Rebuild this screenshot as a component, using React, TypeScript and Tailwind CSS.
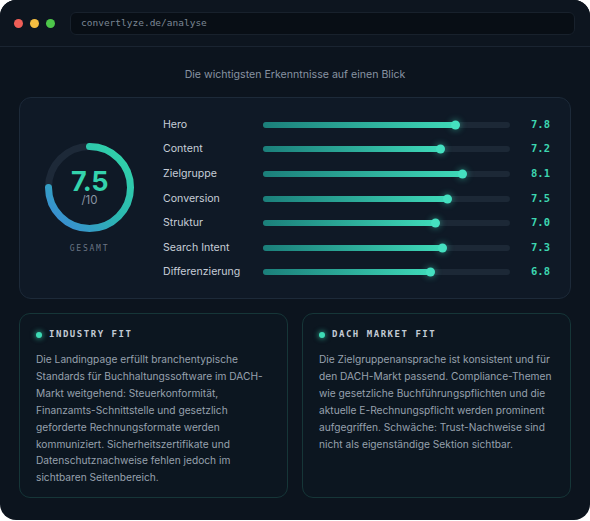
import React from "react";

interface Score {
  label: string;
  value: number;
}

const scores: Score[] = [
  { label: "Hero", value: 7.8 },
  { label: "Content", value: 7.2 },
  { label: "Zielgruppe", value: 8.1 },
  { label: "Conversion", value: 7.5 },
  { label: "Struktur", value: 7.0 },
  { label: "Search Intent", value: 7.3 },
  { label: "Differenzierung", value: 6.8 },
];

const sans = "font-['Inter','Noto_Sans',sans-serif]";
const mono = "font-['DejaVu_Sans_Mono','Liberation_Mono',monospace]";

function ScoreRing({ value }: { value: number }) {
  // ring: 89px, stroke 7
  const size = 89;
  const r = 41;
  const c = size / 2;
  return (
    <div className="relative w-[89px] h-[89px]">
      <svg width={size} height={size} viewBox={`0 0 ${size} ${size}`}>
        <defs>
          <linearGradient id="ringGrad" x1="80" y1="10" x2="10" y2="80" gradientUnits="userSpaceOnUse">
            <stop offset="0" stopColor="#31d3a9" />
            <stop offset="0.5" stopColor="#2bb8b0" />
            <stop offset="1" stopColor="#3a8bd3" />
          </linearGradient>
        </defs>
        <circle cx={c} cy={c} r={r} fill="none" stroke="#1d2938" strokeWidth={7} />
        <path
          d={`M ${c} ${c - r} A ${r} ${r} 0 1 1 ${c - r} ${c}`}
          fill="none"
          stroke="url(#ringGrad)"
          strokeWidth={7}
          strokeLinecap="round"
        />
      </svg>
      <div className="absolute inset-0 flex flex-col items-center justify-center pt-[2px]">
        <span className={`${sans} text-[27px] font-bold leading-[22px] text-[#34d3ad] tracking-[-0.5px]`}>
          {value.toFixed(1)}
        </span>
        <span className={`${sans} mt-[1px] text-[11.5px] leading-[12px] text-[#8a95a3]`}>/10</span>
      </div>
    </div>
  );
}

function ScoreRow({ item }: { item: Score }) {
  return (
    <div className="flex items-center h-[24.6px] pt-[1px]">
      <span className={`${sans} w-[100px] text-[10.6px] text-[#c6cdd7]`}>{item.label}</span>
      <div className="w-[247px] h-[6px] rounded-full bg-[#1c2836] flex">
        <div
          className="relative h-full rounded-full bg-gradient-to-r from-[#1b7f7a] to-[#3fdab9]"
          style={{ width: `${item.value * 10}%` }}
        >
          <div className="absolute right-[-4px] top-1/2 -translate-y-1/2 w-[9px] h-[9px] rounded-full bg-[#45e0c0] shadow-[0_0_6px_1px_rgba(62,217,185,0.4)]" />
        </div>
      </div>
      <span className={`${mono} ml-[21px] text-[10.5px] font-bold text-[#3dd6b0]`}>
        {item.value.toFixed(1)}
      </span>
    </div>
  );
}

function FitCard({ title, text }: { title: string; text: string }) {
  return (
    <div className="rounded-[11px] border border-[#163638] bg-[#0c1620] pl-[16px] pr-[8px] pt-[13px] pb-[8px]">
      <div className="flex items-center gap-[7px] h-[16px]">
        <span className="w-[6px] h-[6px] rounded-full bg-[#3ddbb5] shadow-[0_0_5px_1px_rgba(61,219,181,0.55)]" />
        <span className={`${mono} text-[9px] font-bold tracking-[0.17em] text-[#c3cbd5]`}>{title}</span>
      </div>
      <p className={`${sans} mt-[8px] text-[10.2px] leading-[16.9px] text-[#97a1ae]`}>{text}</p>
    </div>
  );
}

export default function App() {
  return (
    <div className="w-[590px] h-[521px] bg-white">
      <div className="w-[590px] h-[520px] rounded-[16px] bg-[#0c141e] flex flex-col overflow-hidden">
        {/* title bar */}
        <div className="h-[47px] flex items-center border-b border-[#1a2431] pl-[14px] pr-[15px] bg-[#0d151f]">
          <div className="flex items-center gap-[7px]">
            <span className="w-[9px] h-[9px] rounded-full bg-[#ef5e57]" />
            <span className="w-[9px] h-[9px] rounded-full bg-[#f4bd41]" />
            <span className="w-[9px] h-[9px] rounded-full bg-[#4dc64a]" />
          </div>
          <div className="ml-[15px] flex-1 h-[23px] rounded-[6px] border border-[#18212c] bg-[#080e15] flex items-center pl-[10px]">
            <span className={`${mono} text-[9.5px] text-[#7b8694]`}>convertlyze.de/analyse</span>
          </div>
        </div>

        {/* content */}
        <div className="flex-1 px-[19px] pt-[20px]">
          <p className={`${sans} text-center text-[10.6px] leading-[16px] text-[#8893a2]`}>
            Die wichtigsten Erkenntnisse auf einen Blick
          </p>

          <div className="mt-[14px] h-[202px] rounded-[12px] border border-[#1d2a39] bg-[#0f1926] flex items-center pl-[25px]">
            <div className="flex flex-col items-center gap-[11px] pt-[2px]">
              <ScoreRing value={7.5} />
              <span className={`${mono} text-[8px] tracking-[0.22em] text-[#6a7584]`}>GESAMT</span>
            </div>
            <div className="ml-[29px] flex flex-col">
              {scores.map((s) => (
                <ScoreRow key={s.label} item={s} />
              ))}
            </div>
          </div>

          <div className="mt-[14px] grid grid-cols-2 gap-[14px] h-[185px]">
            <FitCard
              title="INDUSTRY FIT"
              text="Die Landingpage erfüllt branchentypische Standards für Buchhaltungssoftware im DACH-Markt weitgehend: Steuerkonformität, Finanzamts-Schnittstelle und gesetzlich geforderte Rechnungsformate werden kommuniziert. Sicherheitszertifikate und Datenschutznachweise fehlen jedoch im sichtbaren Seitenbereich."
            />
            <FitCard
              title="DACH MARKET FIT"
              text="Die Zielgruppenansprache ist konsistent und für den DACH-Markt passend. Compliance-Themen wie gesetzliche Buchführungspflichten und die aktuelle E-Rechnungspflicht werden prominent aufgegriffen. Schwäche: Trust-Nachweise sind nicht als eigenständige Sektion sichtbar."
            />
          </div>
        </div>
      </div>
    </div>
  );
}
